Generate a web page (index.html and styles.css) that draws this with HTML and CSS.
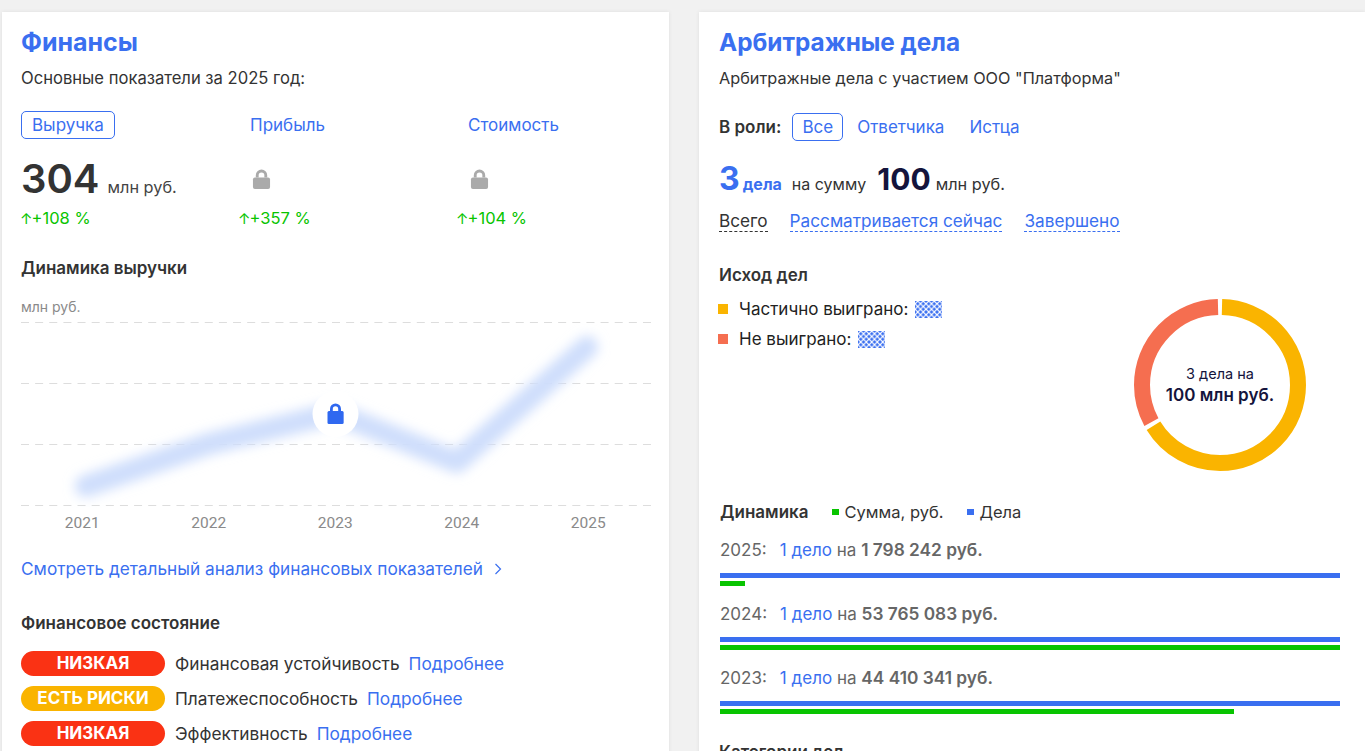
FILE: index.html
```html
<!DOCTYPE html>
<html lang="en">
<head>
    <meta charset="UTF-8">
    <meta name="viewport" content="width=device-width, initial-scale=1.0">
    <title>Финансы и арбитражные дела</title>
    <link rel="stylesheet" href="styles.css">
</head>
<body>
    <main class="page">
        <!-- Finance card -->
        <section class="card card-finance">
            <h2 class="card-title">Финансы</h2>
            <p class="card-lead">Основные показатели за 2025 год:</p>

            <div class="metrics">
                <div class="metric">
                    <a class="tab tab-active">Выручка</a>
                    <div class="metric-value"><span class="big-num">304</span><span class="unit">млн руб.</span></div>
                    <div class="growth"><span class="arrow">↑</span>+108 %</div>
                </div>
                <div class="metric">
                    <a class="tab">Прибыль</a>
                    <div class="metric-value metric-locked">
                        <svg class="lock-icon" viewBox="0 0 20 22"><path d="M4 9V6.5a6 6 0 0 1 12 0V9h-3V6.5a3 3 0 0 0-6 0V9z"/><rect x="1" y="9" width="18" height="12" rx="2"/></svg>
                    </div>
                    <div class="growth"><span class="arrow">↑</span>+357 %</div>
                </div>
                <div class="metric">
                    <a class="tab">Стоимость</a>
                    <div class="metric-value metric-locked">
                        <svg class="lock-icon" viewBox="0 0 20 22"><path d="M4 9V6.5a6 6 0 0 1 12 0V9h-3V6.5a3 3 0 0 0-6 0V9z"/><rect x="1" y="9" width="18" height="12" rx="2"/></svg>
                    </div>
                    <div class="growth"><span class="arrow">↑</span>+104 %</div>
                </div>
            </div>

            <h3 class="sub-title chart-title">Динамика выручки</h3>
            <div class="chart-unit">млн руб.</div>
            <div class="chart">
                <svg class="chart-svg" viewBox="0 0 630 186" width="630" height="186">
                    <defs>
                        <filter id="blur-line" x="-10%" y="-30%" width="120%" height="160%">
                            <feGaussianBlur stdDeviation="6"/>
                        </filter>
                    </defs>
                    <g class="chart-grid">
                        <line x1="0" y1="0.5" x2="630" y2="0.5"/>
                        <line x1="0" y1="61.5" x2="630" y2="61.5"/>
                        <line x1="0" y1="122.5" x2="630" y2="122.5"/>
                        <line x1="0" y1="183.5" x2="630" y2="183.5"/>
                    </g>
                    <polyline class="chart-line" filter="url(#blur-line)" points="65,164 187,122 314,91 436,140 566,25"/>
                    <circle cx="314.500" cy="92" r="23" fill="#fff"/>
                    <g class="chart-lock" transform="translate(306 81)">
                        <path d="M3 9V6a5.500 5.500 0 0 1 11 0v3h-2.800V6a2.700 2.700 0 0 0-5.400 0v3z"/>
                        <rect x="0" y="8" width="17" height="13" rx="1.500" transform="translate(0.500 0) scale(0.950 1)"/>
                    </g>
                </svg>
                <div class="chart-years">
                    <span>2021</span><span>2022</span><span>2023</span><span>2024</span><span>2025</span>
                </div>
            </div>

            <a class="detail-link">Смотреть детальный анализ финансовых показателей
                <svg class="chevron" viewBox="0 0 8 12"><path d="M1.500 1l5 5-5 5"/></svg>
            </a>

            <h3 class="sub-title state-title">Финансовое состояние</h3>
            <ul class="state-list">
                <li class="state-row"><span class="badge badge-red">НИЗКАЯ</span><span>Финансовая устойчивость</span><a>Подробнее</a></li>
                <li class="state-row"><span class="badge badge-amber">ЕСТЬ РИСКИ</span><span>Платежеспособность</span><a>Подробнее</a></li>
                <li class="state-row"><span class="badge badge-red">НИЗКАЯ</span><span>Эффективность</span><a>Подробнее</a></li>
            </ul>
        </section>

        <!-- Court cases card -->
        <section class="card card-cases">
            <h2 class="card-title">Арбитражные дела</h2>
            <p class="card-lead">Арбитражные дела с участием ООО "Платформа"</p>

            <div class="roles">
                <strong>В роли:</strong>
                <a class="tab tab-active">Все</a>
                <a class="role-link">Ответчика</a>
                <a class="role-link">Истца</a>
            </div>

            <div class="cases-total">
                <span class="cases-num">3</span><span class="cases-word">дела</span>
                <span class="cases-on">на сумму</span>
                <span class="cases-sum">100</span><span class="cases-unit">млн руб.</span>
            </div>

            <div class="case-filters">
                <a class="filter filter-current">Всего</a>
                <a class="filter">Рассматривается сейчас</a>
                <a class="filter">Завершено</a>
            </div>

            <div class="outcome">
                <div class="outcome-legend">
                    <h3 class="sub-title">Исход дел</h3>
                    <div class="legend-row"><i class="square square-amber"></i>Частично выиграно: <span class="hidden-dots"></span></div>
                    <div class="legend-row"><i class="square square-coral"></i>Не выиграно: <span class="hidden-dots"></span></div>
                </div>
                <div class="donut">
                    <svg viewBox="0 0 172 172" width="172" height="172">
                        <g fill="none" stroke-width="16" transform="rotate(-90 86 86)">
                            <circle cx="86" cy="86" r="78" pathLength="360" stroke="#fab400" stroke-dasharray="237 123" stroke-dashoffset="-1.500"/>
                            <circle cx="86" cy="86" r="78" pathLength="360" stroke="#f56e50" stroke-dasharray="117 243" stroke-dashoffset="-241.500"/>
                        </g>
                    </svg>
                    <div class="donut-text">
                        <div>3 дела на</div>
                        <strong>100 млн руб.</strong>
                    </div>
                </div>
            </div>

            <div class="dynamics">
                <div class="dynamics-head">
                    <h3 class="sub-title">Динамика</h3>
                    <span class="key"><i class="key-dot key-green"></i>Сумма, руб.</span>
                    <span class="key"><i class="key-dot key-blue"></i>Дела</span>
                </div>
                <div class="year-row">
                    <div class="year-text"><span class="year">2025:</span><a>1 дело</a> на <b>1 798 242 руб.</b></div>
                    <div class="bar bar-blue"></div>
                    <div class="bar bar-green" style="width: 4%"></div>
                </div>
                <div class="year-row">
                    <div class="year-text"><span class="year">2024:</span><a>1 дело</a> на <b>53 765 083 руб.</b></div>
                    <div class="bar bar-blue"></div>
                    <div class="bar bar-green" style="width: 100%"></div>
                </div>
                <div class="year-row">
                    <div class="year-text"><span class="year">2023:</span><a>1 дело</a> на <b>44 410 341 руб.</b></div>
                    <div class="bar bar-blue"></div>
                    <div class="bar bar-green" style="width: 82.900%"></div>
                </div>
            </div>

            <h3 class="sub-title categories-title">Категории дел</h3>
        </section>
    </main>
</body>
</html>
```

FILE: styles.css
```css
/* Reset and base styles */
* {
    box-sizing: border-box;
    margin: 0;
    padding: 0;
}

html, body {
    height: 751px;
    overflow: hidden;
}

body {
    background: #f1f1f1;
    color: #333;
    font-family: Inter, "Noto Sans", sans-serif;
    font-size: 17px;
    line-height: 20px;
}

a {
    color: #3a6ff0;
    text-decoration: none;
}

/* Page columns */
.page {
    display: flex;
    gap: 30px;
    padding: 12px 0 0 2px;
}

.card {
    background: #fff;
    height: 900px;
    box-shadow: 0 0 4px rgba(0, 0, 0, 0.08);
}

.card-finance {
    width: 667px;
    padding: 16px 19px 0;
}

.card-cases {
    flex: 1;
    padding: 16px 19px 0 20px;
}

.card-title {
    color: #3a6ff0;
    font-size: 25px;
    line-height: 28px;
    font-weight: 700;
}

.card-cases .card-title {
    font-size: 24.300px;
}

.card-lead {
    margin-top: 12px;
    font-size: 16.600px;
    line-height: 20px;
}

.card-cases .card-lead {
    font-size: 16.300px;
}

.sub-title {
    font-size: 17px;
    line-height: 20px;
    font-weight: 600;
}

/* Metric tabs */
.tab {
    display: inline-block;
    height: 28px;
    padding: 0 10px;
    border: 1px solid transparent;
    border-radius: 5px;
    line-height: 26px;
}

.tab-active {
    border-color: #3a6ff0;
}

.metrics {
    display: grid;
    grid-template-columns: 218px 218px 1fr;
    margin-top: 23px;
}

.metric-value {
    display: flex;
    align-items: baseline;
    height: 40px;
    margin-top: 20px;
}

.metric-locked {
    align-items: center;
    padding-left: 13px;
}

.big-num {
    font-size: 40px;
    line-height: 40px;
    font-weight: 600;
}

.unit {
    margin-left: 8px;
    color: #444;
    font-size: 16.300px;
}

.lock-icon {
    width: 19px;
    height: 21px;
    fill: #aaa;
}

.growth {
    height: 20px;
    margin-top: 9px;
    margin-left: -1px;
    color: #08c400;
    font-size: 16.500px;
}

.arrow {
    font-size: 15px;
    margin-right: -1px;
}

/* Revenue chart */
.chart-title {
    margin-top: 30px;
}

.chart-unit {
    margin-top: 19px;
    color: #8a8a8a;
    font-size: 14px;
    line-height: 20px;
}

.chart {
    margin-top: 5px;
}

.chart-svg {
    display: block;
}

.chart-grid line {
    stroke: #ddd;
    stroke-dasharray: 8 6.136;
}

.chart-line {
    fill: none;
    stroke: #cfdefc;
    stroke-width: 22;
    stroke-linecap: round;
    stroke-linejoin: round;
}

.chart-lock {
    fill: #2f68f0;
}

.chart-years {
    display: flex;
    gap: 80px;
    padding-left: 38px;
    color: #8a8a8a;
    font-family: Roboto, sans-serif;
    font-size: 15.500px;
    line-height: 20px;
    margin-top: 5px;
}

.chart-years span {
    width: 46.500px;
    text-align: center;
}

.detail-link {
    display: block;
    margin-top: 26px;
    font-size: 17.250px;
}

.chevron {
    width: 8px;
    height: 12px;
    margin-left: 6px;
    fill: none;
    stroke: #3a6ff0;
    stroke-width: 1.200;
}

/* Financial state rows */
.state-title {
    margin-top: 34px;
}

.state-list {
    list-style: none;
    margin-top: 18px;
}

.state-row {
    display: flex;
    align-items: center;
    gap: 10px;
    height: 25px;
    margin-bottom: 10px;
    font-size: 17.300px;
}

.badge {
    width: 144px;
    height: 25px;
    border-radius: 13px;
    color: #fff;
    font-size: 17px;
    font-weight: 700;
    line-height: 25px;
    text-align: center;
}

.badge-red {
    background: #fa3214;
}

.badge-amber {
    background: #fab400;
}

.state-row a {
    margin-left: -1px;
}

/* Roles */
.roles {
    display: flex;
    align-items: center;
    height: 28px;
    margin-top: 25px;
}

.roles strong {
    margin-right: 11px;
    font-weight: 600;
}

.roles .tab {
    padding: 0 9px;
}

.role-link {
    margin-left: 14px;
}

.role-link + .role-link {
    margin-left: 25px;
}

.cases-total {
    display: flex;
    align-items: baseline;
    margin-top: 21px;
    height: 34px;
}

.cases-num {
    color: #3a6ff0;
    font-size: 32px;
    line-height: 34px;
    font-weight: 700;
}

.cases-word {
    margin-left: 3px;
    color: #3a6ff0;
    font-size: 16px;
    font-weight: 700;
}

.cases-on {
    margin-left: 10px;
    font-size: 16px;
}

.cases-sum {
    margin-left: 11px;
    color: #14143c;
    font-size: 30px;
    line-height: 34px;
    font-weight: 700;
}

.cases-unit {
    margin-left: 5px;
    font-size: 16.300px;
}

.case-filters {
    display: flex;
    gap: 22px;
    margin-top: 15px;
    font-size: 17.200px;
}

.filter {
    height: 21px;
    border-bottom: 1px dashed #3a6ff0;
}

.filter-current {
    color: #333;
    border-bottom-color: #333;
}

/* Outcome */
.outcome {
    display: flex;
    justify-content: space-between;
    margin-top: 33px;
    padding-right: 40px;
}

.legend-row {
    display: flex;
    align-items: center;
    margin: 10px 0 0 -1px;
    color: #222;
    height: 20px;
}

.outcome-legend .sub-title {
    margin-bottom: 14px;
}

.square {
    width: 10px;
    height: 10px;
    margin-right: 11px;
}

.square-amber {
    background: #fab400;
}

.square-coral {
    background: #f56e50;
}

.hidden-dots {
    width: 27px;
    height: 17px;
    margin-left: 7px;
    background-image: radial-gradient(circle, #3a6ff0 1.300px, transparent 1.700px), radial-gradient(circle, #3a6ff0 1.300px, transparent 1.700px);
    background-size: 5.500px 5.500px;
    background-position: 0 0, 2.750px 2.750px;
}

.donut {
    position: relative;
    width: 172px;
    height: 172px;
    margin-top: 34px;
}

.donut svg {
    display: block;
}

.donut-text {
    position: absolute;
    inset: 0;
    display: flex;
    flex-direction: column;
    align-items: center;
    justify-content: center;
    color: #14143c;
    font-size: 14.500px;
    line-height: 20px;
}

.donut-text strong {
    font-size: 17px;
    line-height: 22px;
    font-weight: 600;
}

/* Dynamics */
.dynamics {
    margin-top: 31px;
    padding: 0 6px 0 1px;
}

.dynamics-head {
    display: flex;
    align-items: center;
}

.key {
    display: flex;
    align-items: center;
    margin-left: 24px;
    font-size: 16.500px;
}

.key-dot {
    width: 7px;
    height: 6px;
    margin-right: 5px;
}

.key-green {
    background: #08c400;
}

.key-blue {
    background: #3a6ff0;
}

.year-row {
    height: 64px;
}

.year-text {
    padding-top: 18px;
    height: 51px;
    color: #666;
}

.year {
    margin-right: 13px;
}

.year-text b {
    font-weight: 600;
    font-size: 17.300px;
}

.bar {
    height: 5px;
    margin-bottom: 3px;
}

.bar-blue {
    background: #3a6ff0;
}

.bar-green {
    background: #08c400;
}

.categories-title {
    margin-top: 28px;
}
```
